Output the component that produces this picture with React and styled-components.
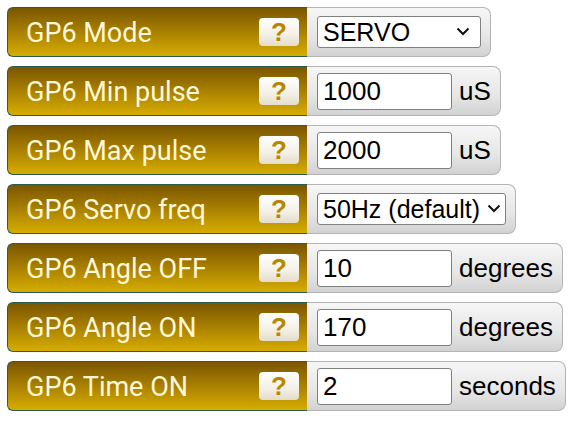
import React from 'react'
import styled, { createGlobalStyle } from 'styled-components'

const Global = createGlobalStyle`
  body {
    margin: 0;
    padding: 7px;
    background: #ffffff;
    font-family: Roboto, "Liberation Sans", Arial, sans-serif;
  }
`

const List = styled.div`
  display: flex;
  flex-direction: column;
  gap: 9px;
`

const Row = styled.div`
  display: flex;
  height: 50px;
`

const Label = styled.div`
  box-sizing: border-box;
  width: 300px;
  display: flex;
  align-items: center;
  justify-content: space-between;
  padding: 2px 8px 0 18px;
  border: 1px solid #2b5a4e;
  border-right: none;
  border-radius: 6px 0 0 6px;
  background: linear-gradient(to bottom, #7a5600 0%, #a57c00 45%, #d6ad00 100%);
  color: #fff8d8;
  font-size: 27px;
`

const Help = styled.div`
  width: 40px;
  height: 28px;
  margin-top: -2px;
  display: flex;
  align-items: center;
  justify-content: center;
  border-radius: 4px;
  background: linear-gradient(to bottom, #ffffff 0%, #f4f0e6 60%, #e4dccb 100%);
  color: #b88700;
  font-family: "Liberation Sans", Arial, sans-serif;
  font-weight: bold;
  font-size: 26px;
`

const Field = styled.div`
  box-sizing: border-box;
  display: flex;
  align-items: center;
  gap: 7px;
  padding: 0 9px 0 10px;
  border: 1px solid #b4b4b4;
  border-left: none;
  border-radius: 0 8px 8px 0;
  background: linear-gradient(to bottom, #f6f6f6 0%, #e6e6e6 60%, #d2d2d2 100%);
  color: #000;
  font-family: "Liberation Sans", Arial, sans-serif;
  font-size: 26px;
`

const Input = styled.input`
  box-sizing: border-box;
  width: 135px;
  height: 37px;
  padding: 0 5px;
  border: 1px solid #808080;
  border-radius: 3px;
  background: #fff;
  font-family: "Liberation Sans", Arial, sans-serif;
  font-size: 26px;
  color: #000;
  outline: none;
`

const SelectWrap = styled.div`
  position: relative;
  display: flex;
`

const Select = styled.select`
  box-sizing: border-box;
  appearance: none;
  height: 32px;
  width: ${({ w }) => w || 'auto'};
  padding: 0 24px 0 5px;
  border: 1px solid #808080;
  border-radius: 3px;
  background: #fff;
  font-family: "Liberation Sans", Arial, sans-serif;
  font-size: 25px;
  color: #000;
`

const Chevron = styled.svg`
  position: absolute;
  right: ${({ r }) => r || '6px'};
  top: 11px;
  pointer-events: none;
`

const rows = [
  { label: 'GP6 Mode', select: ['SERVO'], w: '164px', r: '11px' },
  { label: 'GP6 Min pulse', value: '1000', unit: 'uS' },
  { label: 'GP6 Max pulse', value: '2000', unit: 'uS' },
  { label: 'GP6 Servo freq', select: ['50Hz (default)'], r: '5px' },
  { label: 'GP6 Angle OFF', value: '10', unit: 'degrees' },
  { label: 'GP6 Angle ON', value: '170', unit: 'degrees' },
  { label: 'GP6 Time ON', value: '2', unit: 'seconds' },
]

const App = () => (
  <>
    <Global />
    <List>
      {rows.map((r) => (
        <Row key={r.label}>
          <Label>
            <span>{r.label}</span>
            <Help>?</Help>
          </Label>
          <Field>
            {r.select ? (
              <SelectWrap>
                <Select w={r.w} defaultValue={r.select[0]}>
                  {r.select.map((o) => <option key={o}>{o}</option>)}
                </Select>
                <Chevron r={r.r} width="14" height="9" viewBox="0 0 14 9">
                  <path d="M1.5 1.5 L7 7 L12.5 1.5" fill="none" stroke="#111" strokeWidth="2" />
                </Chevron>
              </SelectWrap>
            ) : (
              <>
                <Input defaultValue={r.value} />
                <span>{r.unit}</span>
              </>
            )}
          </Field>
        </Row>
      ))}
    </List>
  </>
)

export default App
